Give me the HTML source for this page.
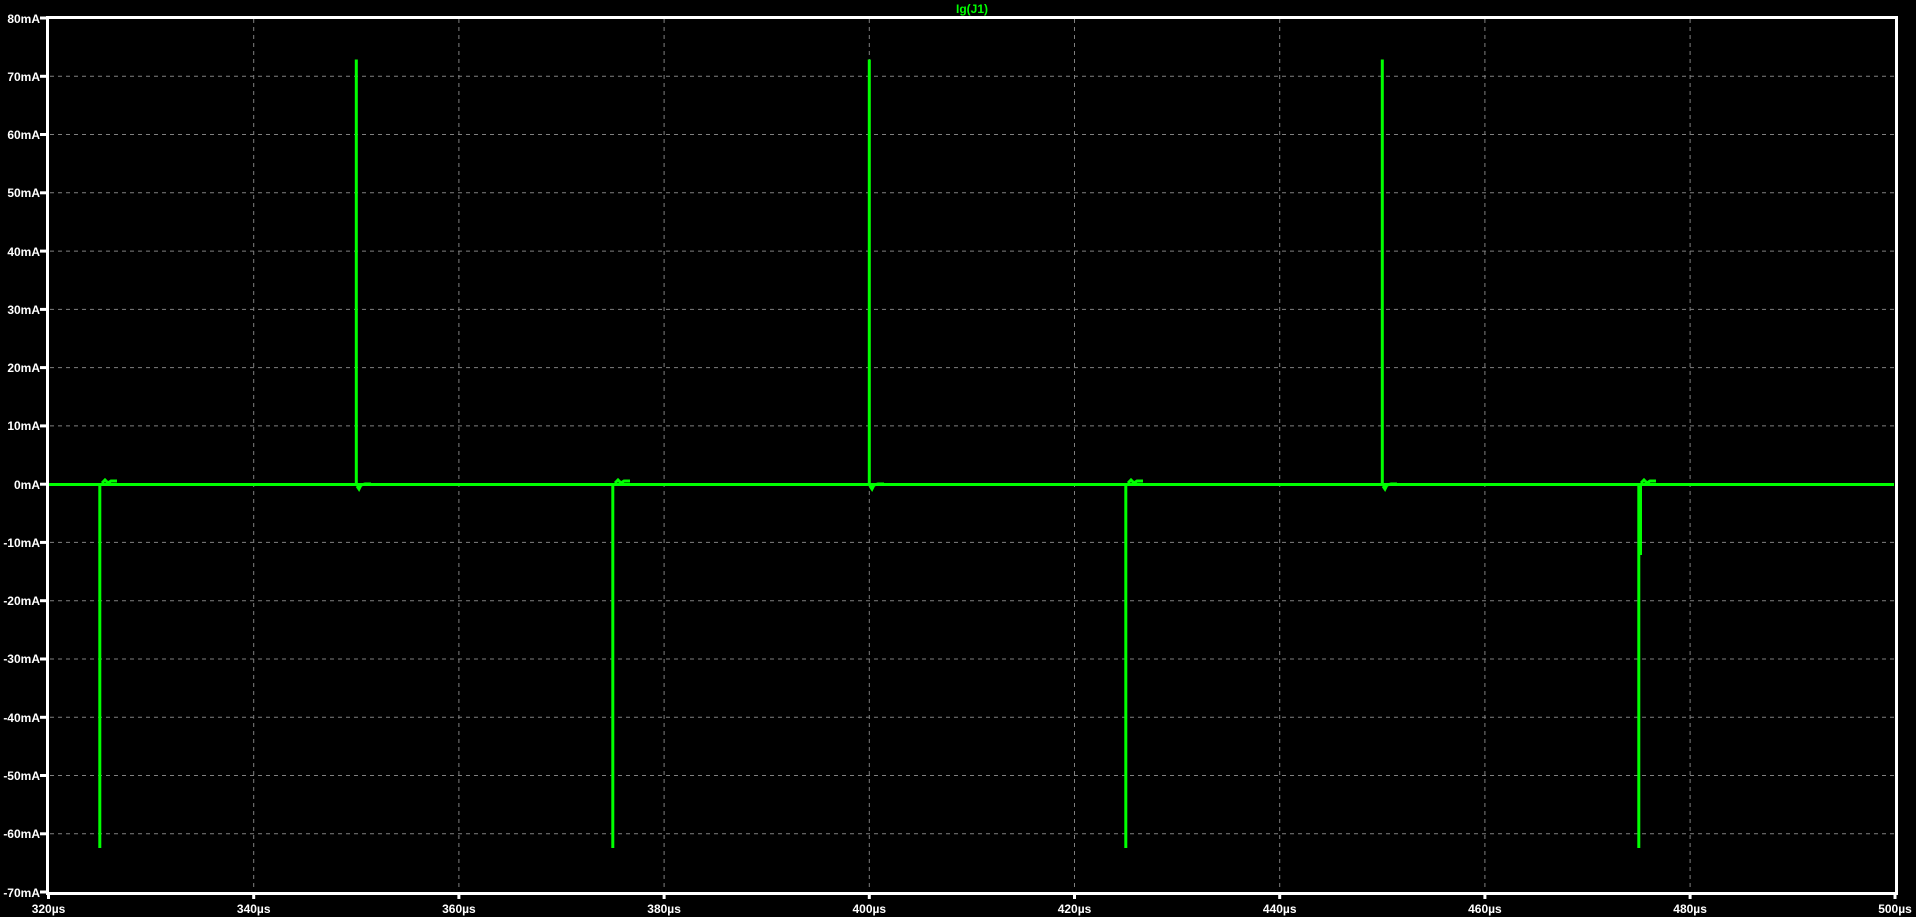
<!DOCTYPE html>
<html><head><meta charset="utf-8"><style>
html,body{margin:0;padding:0;background:#000;width:1916px;height:917px;overflow:hidden}
svg{display:block}
text{font-family:"Liberation Sans",sans-serif;font-weight:bold;font-size:12px;fill:#fff}
</style></head><body>
<svg width="1916" height="917" xmlns="http://www.w3.org/2000/svg">
<rect width="1916" height="917" fill="#000"/>
<g stroke="#808080" stroke-width="1" stroke-dasharray="4,4">
<line x1="50" y1="76.3" x2="1894" y2="76.3"/><line x1="50" y1="134.5" x2="1894" y2="134.5"/>
<line x1="50" y1="192.8" x2="1894" y2="192.8"/><line x1="50" y1="251.1" x2="1894" y2="251.1"/>
<line x1="50" y1="309.4" x2="1894" y2="309.4"/><line x1="50" y1="367.6" x2="1894" y2="367.6"/>
<line x1="50" y1="425.9" x2="1894" y2="425.9"/><line x1="50" y1="484.2" x2="1894" y2="484.2"/>
<line x1="50" y1="542.4" x2="1894" y2="542.4"/><line x1="50" y1="600.7" x2="1894" y2="600.7"/>
<line x1="50" y1="659" x2="1894" y2="659"/><line x1="50" y1="717.3" x2="1894" y2="717.3"/>
<line x1="50" y1="775.5" x2="1894" y2="775.5"/><line x1="50" y1="833.8" x2="1894" y2="833.8"/>
<line x1="253.7" y1="19" x2="253.7" y2="891"/><line x1="458.9" y1="19" x2="458.9" y2="891"/>
<line x1="664.1" y1="19" x2="664.1" y2="891"/><line x1="869.3" y1="19" x2="869.3" y2="891"/>
<line x1="1074.5" y1="19" x2="1074.5" y2="891"/><line x1="1279.7" y1="19" x2="1279.7" y2="891"/>
<line x1="1484.9" y1="19" x2="1484.9" y2="891"/><line x1="1690.1" y1="19" x2="1690.1" y2="891"/>
</g>
<g stroke="#0f0" stroke-width="3" fill="none">
<line x1="49" y1="484.5" x2="1894" y2="484.5"/>
<line x1="356.3" y1="484" x2="356.3" y2="59.5"/>
<line x1="869.3" y1="484" x2="869.3" y2="59.5"/>
<line x1="1382.3" y1="484" x2="1382.3" y2="59.5"/>
<line x1="99.8" y1="484" x2="99.8" y2="848"/>
<line x1="612.8" y1="484" x2="612.8" y2="848"/>
<line x1="1125.8" y1="484" x2="1125.8" y2="848"/>
<line x1="1638.8" y1="484" x2="1638.8" y2="848"/>
<line x1="1640.5" y1="484" x2="1640.5" y2="555"/>
<path d="M102 483 l3 -3 l3 3 l3 -2 l6 0"/>
<path d="M615 483 l3 -3 l3 3 l3 -2 l6 0"/>
<path d="M1128 483 l3 -3 l3 3 l3 -2 l6 0"/>
<path d="M1641 483 l3 -3 l3 3 l3 -2 l6 0"/>
<path d="M357 486 l2 3 l2 -4 l4 -1 l6 0"/>
<path d="M870 486 l2 3 l2 -4 l4 -1 l6 0"/>
<path d="M1383 486 l2 3 l2 -4 l4 -1 l6 0"/>
</g>
<rect x="47" y="17" width="1849" height="876" fill="none" stroke="#fff" stroke-width="3" transform="translate(0.5,0.5)"/>
<g stroke="#fff" stroke-width="3">
<line x1="40" y1="18" x2="48" y2="18"/><line x1="40" y1="76.3" x2="48" y2="76.3"/><line x1="40" y1="134.5" x2="48" y2="134.5"/>
<line x1="40" y1="192.8" x2="48" y2="192.8"/><line x1="40" y1="251.1" x2="48" y2="251.1"/><line x1="40" y1="309.4" x2="48" y2="309.4"/>
<line x1="40" y1="367.6" x2="48" y2="367.6"/><line x1="40" y1="425.9" x2="48" y2="425.9"/><line x1="40" y1="484.2" x2="48" y2="484.2"/>
<line x1="40" y1="542.4" x2="48" y2="542.4"/><line x1="40" y1="600.7" x2="48" y2="600.7"/><line x1="40" y1="659" x2="48" y2="659"/>
<line x1="40" y1="717.3" x2="48" y2="717.3"/><line x1="40" y1="775.5" x2="48" y2="775.5"/><line x1="40" y1="833.8" x2="48" y2="833.8"/>
<line x1="40" y1="892" x2="48" y2="892"/>
<line x1="48.5" y1="892" x2="48.5" y2="899"/><line x1="253.7" y1="892" x2="253.7" y2="899"/><line x1="458.9" y1="892" x2="458.9" y2="899"/>
<line x1="664.1" y1="892" x2="664.1" y2="899"/><line x1="869.3" y1="892" x2="869.3" y2="899"/><line x1="1074.5" y1="892" x2="1074.5" y2="899"/>
<line x1="1279.7" y1="892" x2="1279.7" y2="899"/><line x1="1484.9" y1="892" x2="1484.9" y2="899"/><line x1="1690.1" y1="892" x2="1690.1" y2="899"/>
<line x1="1895" y1="892" x2="1895" y2="899"/>
</g>
<g text-anchor="end">
<text x="40" y="23">80mA</text><text x="40" y="81">70mA</text><text x="40" y="139">60mA</text>
<text x="40" y="197">50mA</text><text x="40" y="256">40mA</text><text x="40" y="314">30mA</text>
<text x="40" y="372">20mA</text><text x="40" y="430">10mA</text><text x="40" y="489">0mA</text>
<text x="40" y="547">-10mA</text><text x="40" y="605">-20mA</text><text x="40" y="663">-30mA</text>
<text x="40" y="722">-40mA</text><text x="40" y="780">-50mA</text><text x="40" y="838">-60mA</text>
<text x="40" y="897">-70mA</text>
</g>
<g text-anchor="middle">
<text x="48.5" y="913">320µs</text><text x="253.7" y="913">340µs</text><text x="458.9" y="913">360µs</text>
<text x="664.1" y="913">380µs</text><text x="869.3" y="913">400µs</text><text x="1074.5" y="913">420µs</text>
<text x="1279.7" y="913">440µs</text><text x="1484.9" y="913">460µs</text><text x="1690.1" y="913">480µs</text>
<text x="1895" y="913">500µs</text>
<text x="972" y="13" style="fill:#0f0">Ig(J1)</text>
</g>
</svg>
</body></html>
